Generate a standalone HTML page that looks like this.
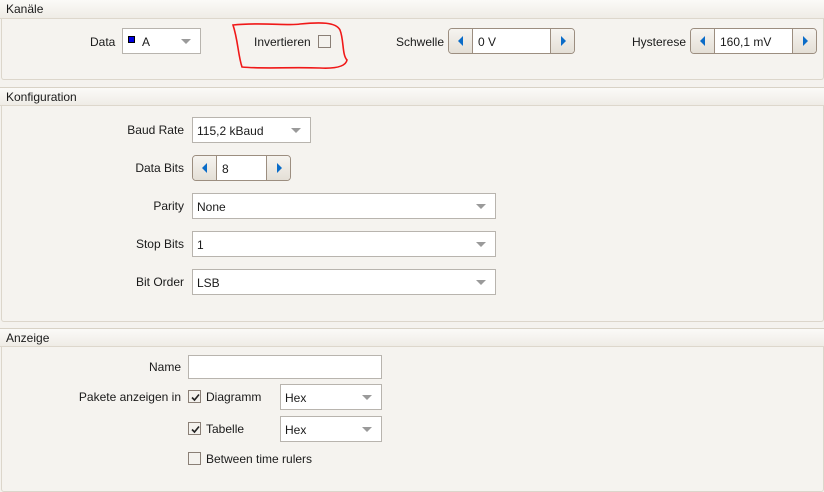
<!DOCTYPE html>
<html><head><meta charset="utf-8"><style>
*{box-sizing:border-box;margin:0;padding:0}
body{width:824px;height:488px;background:#f4f2ee;font-family:"Liberation Sans",sans-serif;font-size:12px;color:#1a1a1a;position:relative;overflow:hidden}
.a{position:absolute}
.hdr{position:absolute;left:0;width:824px;height:19px;background:linear-gradient(#fbfaf8,#efece6);border-top:1px solid #d8d2c6;border-bottom:1px solid #ddd7cc;padding:2px 6px;font-size:12px}
.panel{position:absolute;left:1px;width:823px;border:1px solid #dcd6cb;border-top:none;border-radius:0 0 3px 3px;background:#f5f3ef}
.lbl{position:absolute;text-align:right;white-space:nowrap}
.combo{position:absolute;background:#fff;border:1px solid #b8b4ae;padding:6px 4px 0;white-space:nowrap}
.dd:after{content:"";position:absolute;right:9px;top:10px;border-left:5px solid transparent;border-right:5px solid transparent;border-top:5px solid #9a9a9a}
.spin{position:absolute;height:26px;border:1px solid #9c8e80;border-radius:4px;background:#fff;overflow:hidden}
.spin .b{position:absolute;top:0;width:24px;height:24px;background:linear-gradient(#f6f4f0,#e4dfd6)}
.spin .l{left:0;border-right:1px solid #9c8e80}
.spin .r{right:0;border-left:1px solid #9c8e80}
.spin .l:after{content:"";position:absolute;left:9px;top:7px;border-top:5px solid transparent;border-bottom:5px solid transparent;border-right:5px solid #0a6cc8}
.spin .r:after{content:"";position:absolute;left:10px;top:7px;border-top:5px solid transparent;border-bottom:5px solid transparent;border-left:5px solid #0a6cc8}
.spin .t{position:absolute;left:29px;top:6px}
.cb{position:absolute;width:13px;height:13px;border:1px solid #8a7f76;background:#f4f2ee}
.cb svg{position:absolute;left:1px;top:1px}
</style></head><body>
<div class="hdr" style="top:-1px;height:20px">Kanäle</div>
<div class="panel" style="top:19px;height:61px"></div>
<div class="lbl" style="left:90px;top:35px">Data</div>
<div class="combo dd" style="left:122px;top:28px;width:79px;height:26px"><span style="display:inline-block;width:7px;height:7px;background:#0000e0;border:1px solid #000;margin:0 7px 0 1px;vertical-align:3px"></span>A</div>
<div class="lbl" style="left:254px;top:35px">Invertieren</div>
<div class="cb" style="left:318px;top:35px"></div>
<svg class="a" style="left:0;top:0" width="824" height="90"><path d="M233 25 C260 22 290 26 300 24 C320 22 336 22 340 30 C344 40 342 55 347 60 C346 65 340 69 320 68 C290 67 260 69 242 67 C238 55 238 40 233 25 Z" fill="none" stroke="#f01818" stroke-width="1.6"/></svg>
<div class="lbl" style="left:396px;top:35px">Schwelle</div>
<div class="spin" style="left:448px;top:28px;width:127px"><div class="b l"></div><div class="t">0 V</div><div class="b r"></div></div>
<div class="lbl" style="left:632px;top:35px">Hysterese</div>
<div class="spin" style="left:690px;top:28px;width:127px"><div class="b l"></div><div class="t">160,1 mV</div><div class="b r"></div></div>

<div class="hdr" style="top:87px">Konfiguration</div>
<div class="panel" style="top:106px;height:216px"></div>
<div class="lbl" style="right:640px;top:123px">Baud Rate</div>
<div class="combo dd" style="left:192px;top:117px;width:119px;height:26px">115,2 kBaud</div>
<div class="lbl" style="right:640px;top:161px">Data Bits</div>
<div class="spin" style="left:192px;top:155px;width:99px"><div class="b l"></div><div class="t">8</div><div class="b r"></div></div>
<div class="lbl" style="right:640px;top:199px">Parity</div>
<div class="combo dd" style="left:192px;top:193px;width:304px;height:26px">None</div>
<div class="lbl" style="right:640px;top:237px">Stop Bits</div>
<div class="combo dd" style="left:192px;top:231px;width:304px;height:26px">1</div>
<div class="lbl" style="right:640px;top:275px">Bit Order</div>
<div class="combo dd" style="left:192px;top:269px;width:304px;height:26px">LSB</div>

<div class="hdr" style="top:328px">Anzeige</div>
<div class="panel" style="top:347px;height:145px"></div>
<div class="lbl" style="right:643px;top:360px">Name</div>
<div class="combo" style="left:188px;top:355px;width:194px;height:24px;"></div>
<div class="lbl" style="right:643px;top:390px">Pakete anzeigen in</div>
<div class="cb" style="left:188px;top:390px"><svg width="11" height="11"><path d="M2 5.5 L4.5 8 L9 2.5" fill="none" stroke="#222" stroke-width="1.6"/></svg></div>
<div class="a" style="left:206px;top:390px">Diagramm</div>
<div class="combo dd" style="left:280px;top:384px;width:102px;height:26px">Hex</div>
<div class="cb" style="left:188px;top:422px"><svg width="11" height="11"><path d="M2 5.5 L4.5 8 L9 2.5" fill="none" stroke="#222" stroke-width="1.6"/></svg></div>
<div class="a" style="left:206px;top:422px">Tabelle</div>
<div class="combo dd" style="left:280px;top:416px;width:102px;height:26px">Hex</div>
<div class="cb" style="left:188px;top:452px"></div>
<div class="a" style="left:206px;top:452px">Between time rulers</div>
</body></html>
